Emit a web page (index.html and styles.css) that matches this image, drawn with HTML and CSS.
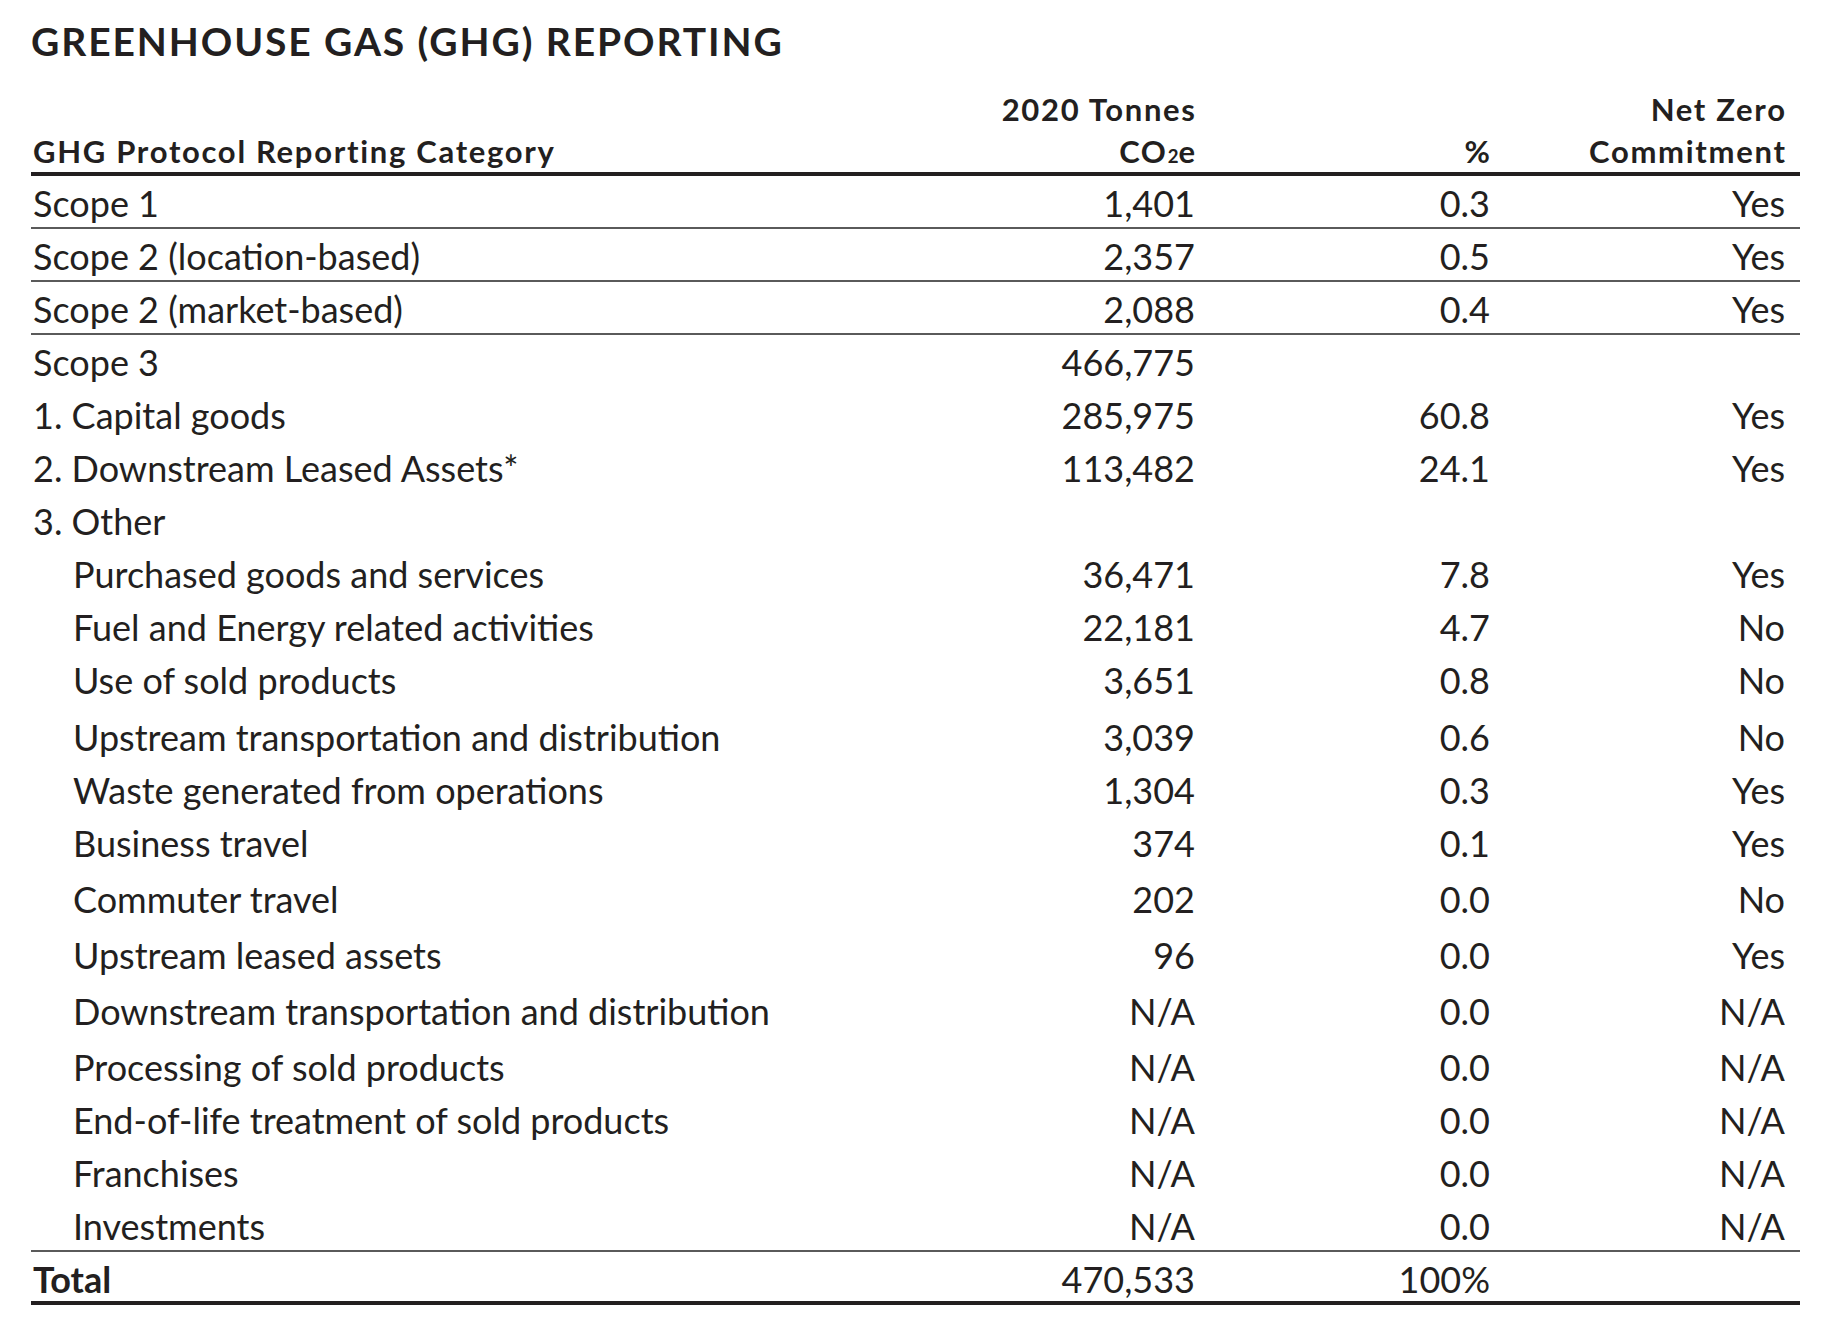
FILE: index.html
```html
<!DOCTYPE html>
<html lang="en">
<head>
<meta charset="utf-8">
<title>Greenhouse Gas (GHG) Reporting</title>
<link rel="stylesheet" href="styles.css">
</head>
<body>
<main class="page">
  <h1 class="title">GREENHOUSE GAS (GHG) REPORTING</h1>
  <div class="table" role="table">
    <div class="row head" role="row">
      <div class="cell label" role="columnheader">GHG Protocol Reporting Category</div>
      <div class="cell num" role="columnheader">2020 Tonnes<br>CO<span class="sub">2</span>e</div>
      <div class="cell num" role="columnheader">%</div>
      <div class="cell num last" role="columnheader">Net Zero<br>Commitment</div>
    </div>

    <div class="row lined" role="row">
      <div class="cell label">Scope 1</div>
      <div class="cell num">1,401</div>
      <div class="cell num">0.3</div>
      <div class="cell num last">Yes</div>
    </div>
    <div class="row lined" role="row">
      <div class="cell label">Scope 2 (location-based)</div>
      <div class="cell num">2,357</div>
      <div class="cell num">0.5</div>
      <div class="cell num last">Yes</div>
    </div>
    <div class="row lined" role="row">
      <div class="cell label">Scope 2 (market-based)</div>
      <div class="cell num">2,088</div>
      <div class="cell num">0.4</div>
      <div class="cell num last">Yes</div>
    </div>
    <div class="row" role="row">
      <div class="cell label">Scope 3</div>
      <div class="cell num">466,775</div>
      <div class="cell num"></div>
      <div class="cell num last"></div>
    </div>
    <div class="row" role="row">
      <div class="cell label">1. Capital goods</div>
      <div class="cell num">285,975</div>
      <div class="cell num">60.8</div>
      <div class="cell num last">Yes</div>
    </div>
    <div class="row" role="row">
      <div class="cell label">2. Downstream Leased Assets*</div>
      <div class="cell num">113,482</div>
      <div class="cell num">24.1</div>
      <div class="cell num last">Yes</div>
    </div>
    <div class="row" role="row">
      <div class="cell label">3. Other</div>
      <div class="cell num"></div>
      <div class="cell num"></div>
      <div class="cell num last"></div>
    </div>
    <div class="row" role="row">
      <div class="cell label sub-item">Purchased goods and services</div>
      <div class="cell num">36,471</div>
      <div class="cell num">7.8</div>
      <div class="cell num last">Yes</div>
    </div>
    <div class="row" role="row">
      <div class="cell label sub-item">Fuel and Energy related activities</div>
      <div class="cell num">22,181</div>
      <div class="cell num">4.7</div>
      <div class="cell num last">No</div>
    </div>
    <div class="row taller" role="row">
      <div class="cell label sub-item">Use of sold products</div>
      <div class="cell num">3,651</div>
      <div class="cell num">0.8</div>
      <div class="cell num last">No</div>
    </div>
    <div class="row" role="row">
      <div class="cell label sub-item">Upstream transportation and distribution</div>
      <div class="cell num">3,039</div>
      <div class="cell num">0.6</div>
      <div class="cell num last">No</div>
    </div>
    <div class="row" role="row">
      <div class="cell label sub-item">Waste generated from operations</div>
      <div class="cell num">1,304</div>
      <div class="cell num">0.3</div>
      <div class="cell num last">Yes</div>
    </div>
    <div class="row tall" role="row">
      <div class="cell label sub-item">Business travel</div>
      <div class="cell num">374</div>
      <div class="cell num">0.1</div>
      <div class="cell num last">Yes</div>
    </div>
    <div class="row tall" role="row">
      <div class="cell label sub-item">Commuter travel</div>
      <div class="cell num">202</div>
      <div class="cell num">0.0</div>
      <div class="cell num last">No</div>
    </div>
    <div class="row tall" role="row">
      <div class="cell label sub-item">Upstream leased assets</div>
      <div class="cell num">96</div>
      <div class="cell num">0.0</div>
      <div class="cell num last">Yes</div>
    </div>
    <div class="row tall" role="row">
      <div class="cell label sub-item">Downstream transportation and distribution</div>
      <div class="cell num">N/A</div>
      <div class="cell num">0.0</div>
      <div class="cell num last">N/A</div>
    </div>
    <div class="row" role="row">
      <div class="cell label sub-item">Processing of sold products</div>
      <div class="cell num">N/A</div>
      <div class="cell num">0.0</div>
      <div class="cell num last">N/A</div>
    </div>
    <div class="row" role="row">
      <div class="cell label sub-item">End-of-life treatment of sold products</div>
      <div class="cell num">N/A</div>
      <div class="cell num">0.0</div>
      <div class="cell num last">N/A</div>
    </div>
    <div class="row" role="row">
      <div class="cell label sub-item">Franchises</div>
      <div class="cell num">N/A</div>
      <div class="cell num">0.0</div>
      <div class="cell num last">N/A</div>
    </div>
    <div class="row lined" role="row">
      <div class="cell label sub-item">Investments</div>
      <div class="cell num">N/A</div>
      <div class="cell num">0.0</div>
      <div class="cell num last">N/A</div>
    </div>
    <div class="row total" role="row">
      <div class="cell label">Total</div>
      <div class="cell num">470,533</div>
      <div class="cell num">100%</div>
      <div class="cell num last"></div>
    </div>
  </div>
</main>
</body>
</html>
```

FILE: styles.css
```css
html, body {
  margin: 0;
  padding: 0;
  background: #ffffff;
}

body {
  font-family: "Lato", "Liberation Sans", sans-serif;
  color: #231f20;
}

.page {
  padding: 20px 30px 0 31px;
  width: 1769px;
}

.title {
  margin: 0;
  font-size: 39px;
  line-height: 43px;
  font-weight: 700;
  letter-spacing: 1.9px;
}

.table {
  margin-top: 25px;
  width: 1769px;
}

.row {
  display: grid;
  grid-template-columns: 869px 295px 295px 310px;
  height: 53px;
  box-sizing: border-box;
  padding-top: 6px;
  font-size: 36px;
  line-height: 43px;
}

.row.head {
  height: auto;
  padding: 0 0 0 0;
  font-size: 31px;
  line-height: 42px;
  font-weight: 700;
  letter-spacing: 1.7px;
  border-bottom: 4px solid #231f20;
  align-items: end;
}

.row.head .num {
  margin-right: -1.7px;
}

.row.lined {
  border-bottom: 2px solid #5a5a5a;
}

.row.tall {
  height: 56px;
}

.row.taller {
  height: 57px;
}

.row.total {
  font-weight: 700;
  border-bottom: 4px solid #231f20;
}

.row.total .num {
  font-weight: 400;
}

.cell {
  white-space: nowrap;
}

.label {
  padding-left: 2px;
}

.sub-item {
  padding-left: 42px;
}

.num {
  text-align: right;
}

.last {
  padding-right: 15px;
}

.sub {
  font-size: 0.6em;
  line-height: 0;
  vertical-align: 0;
  letter-spacing: 0;
}
```
